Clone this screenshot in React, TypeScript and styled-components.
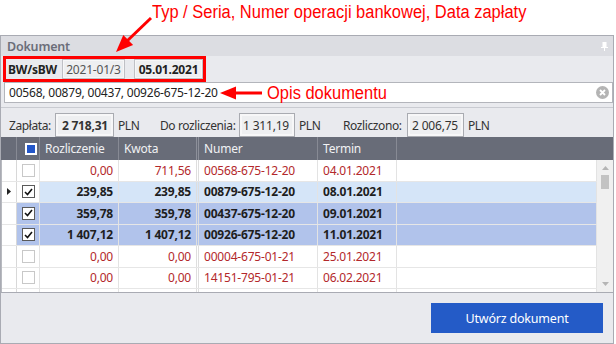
import React from "react";
import styled, { createGlobalStyle, css } from "styled-components";

const Global = createGlobalStyle`
  html, body { margin: 0; padding: 0; background: #ffffff; }
  body { font-family: "Segoe UI", "Noto Sans", "Open Sans", sans-serif; font-size: 12px; color: #222; letter-spacing: -0.2px; }
  * { box-sizing: border-box; }
`;

const UI = `"Segoe UI", "Noto Sans", "Open Sans", sans-serif`;
const ANN = `"Liberation Sans", Arial, sans-serif`;

const Page = styled.div`
  position: relative;
  width: 616px;
  height: 344px;
  overflow: hidden;
`;

const TopNote = styled.div`
  height: 35px;
  padding: 2px 0 0 152px;
`;

const NoteText = styled.span`
  display: inline-block;
  font-family: ${ANN};
  font-size: 18px;
  line-height: 20px;
  letter-spacing: 0;
  color: #ff0000;
  white-space: nowrap;
  transform: scaleX(0.915);
  transform-origin: left center;
`;

const SideNote = styled.div`
  position: absolute;
  left: 267px;
  top: 83px;
`;

const Arrows = styled.svg`
  position: absolute;
  left: 0;
  top: 0;
  pointer-events: none;
`;

const Panel = styled.div`
  width: 614px;
  height: 309px;
  border: 1px solid #a9abb3;
  background: #e9eaee;
  display: flex;
  flex-direction: column;
`;

const PanelHeader = styled.div`
  height: 20px;
  background: #dcdde2;
  display: flex;
  align-items: center;
  justify-content: space-between;
  padding: 0 5px 0 6px;
`;

const Title = styled.span`
  font-family: ${UI};
  font-weight: 600;
  font-size: 12.5px;
  color: #6b6d79;
`;

const DocRow = styled.div`
  display: flex;
  padding-left: 2px;
`;

const RedBox = styled.div`
  width: 203px;
  height: 26px;
  border: 3px solid #ff0000;
  display: flex;
  align-items: stretch;
  padding-left: 2px;
`;

const TypeLabel = styled.span`
  font-weight: 700;
  font-size: 12px;
  color: #222;
  display: flex;
  align-items: center;
  width: 54px;
  white-space: nowrap;
`;

const Field = styled.div<{ $w: number; $bold?: boolean; $ml?: number }>`
  flex: none;
  width: ${(p) => p.$w}px;
  margin-left: ${(p) => p.$ml ?? 0}px;
  border: 1px solid #bfc0c5;
  box-shadow: inset 0 0 0 1px #f7f7f8;
  background: #eeeff1;
  display: flex;
  align-items: center;
  justify-content: center;
  padding: 0 3px;
  font-size: 12px;
  white-space: nowrap;
  ${(p) =>
    p.$bold
      ? css`
          font-weight: 700;
          color: #222;
        `
      : css`
          color: #555;
        `}
`;

const DescInput = styled.div`
  margin-left: 3px;
  width: 609px;
  height: 21px;
  background: #ffffff;
  border: 1px solid #b3b5bb;
  display: flex;
  align-items: center;
  justify-content: space-between;
  padding: 0 3px 0 4px;
  font-size: 12px;
  color: #222;
`;

const Summary = styled.div`
  margin-top: 4px;
  border-top: 1px solid #c9cbd1;
  padding: 5px 0 0 8px;
  height: 30px;
  display: flex;
  align-items: stretch;
  font-size: 12px;
  color: #333;
`;

const SumLabel = styled.span<{ $w: number; $pl?: number }>`
  flex: none;
  display: flex;
  align-items: center;
  width: ${(p) => p.$w}px;
  padding-left: ${(p) => p.$pl ?? 0}px;
  white-space: nowrap;
  letter-spacing: -0.4px;
`;

const SumValue = styled(Field)`
  justify-content: flex-end;
  padding-right: 5px;
  border-color: #a9abb1;
  box-shadow: inset 0 0 0 2px #f7f7f8;
  color: #333;
`;

const Grid = styled.div`
  display: flex;
  flex-direction: column;
  border-bottom: 1px solid #a9abb3;
`;

const HeadRow = styled.div`
  display: grid;
  grid-template-columns: 16px 23px 79px 80px 119px 79px 200px 16px;
  height: 23px;
  background: #686c78;
`;

const HeadCell = styled.div<{ $double?: boolean; $last?: boolean }>`
  border-right: ${(p) => (p.$last ? "none" : p.$double ? "3px double #8d909a" : "1px solid #878a94")};
  color: #f1f2f4;
  font-size: 12px;
  display: flex;
  align-items: center;
  padding-left: 5px;
`;

const HeadCheck = styled.div`
  width: 12px;
  height: 12px;
  background: #2457c9;
  border: 2px solid #ffffff;
  margin-left: 3px;
`;

const BodyWrap = styled.div`
  display: flex;
  height: 132px;
  overflow: hidden;
`;

const Rows = styled.div`
  width: 596px;
  background: #ffffff;
  border-left: 1px solid #b8bac0;
`;

type Kind = "normal" | "focus" | "sel";

const Row = styled.div<{ $kind: Kind }>`
  display: grid;
  grid-template-columns: 15px 23px 79px 80px 119px 79px 200px;
  height: 21.5px;
  border-bottom: 1px solid #e6e6e6;
  ${(p) =>
    p.$kind === "normal"
      ? css`
          color: #b3282b;
        `
      : css`
          color: #1e1e1e;
          font-weight: 700;
        `}
`;

const Cell = styled.div<{ $kind: Kind; $right?: boolean; $double?: boolean; $plain?: boolean }>`
  display: flex;
  align-items: center;
  justify-content: ${(p) => (p.$right ? "flex-end" : "flex-start")};
  padding: ${(p) => (p.$right ? "0 5px 0 0" : "0 0 0 5px")};
  font-size: 12px;
  white-space: nowrap;
  border-right: ${(p) => (p.$double ? "3px double #dedede" : "1px solid #e3e3e3")};
  background: ${(p) =>
    p.$plain ? "#ffffff" : p.$kind === "focus" ? "#d5e5f8" : p.$kind === "sel" ? "#b1c3eb" : "#ffffff"};
`;

const IndCell = styled.div`
  border-right: 1px solid #d8d8d8;
  display: flex;
  align-items: center;
  justify-content: center;
  background: #ffffff;
`;

const Box = styled.div<{ $checked: boolean }>`
  width: 13px;
  height: 13px;
  background: #ffffff;
  border: 1px solid ${(p) => (p.$checked ? "#5a5a5a" : "#c8c8c8")};
  display: flex;
  align-items: center;
  justify-content: center;
`;

const CheckCell = styled(Cell)`
  justify-content: center;
  padding: 0;
`;

const Scroll = styled.div`
  width: 16px;
  background: #f0f0f0;
  display: flex;
  flex-direction: column;
  align-items: center;
  padding: 6px 0;
`;

const Thumb = styled.div`
  width: 8px;
  height: 14px;
  background: #c3c3c3;
  margin-top: 5px;
`;

const Spacer = styled.div`
  flex: 1;
`;

const Footer = styled.div`
  flex: 1;
  display: flex;
  justify-content: flex-end;
  align-items: flex-start;
  padding: 10px 10px 0 0;
`;

const Button = styled.button`
  width: 172px;
  height: 30px;
  border: none;
  background: #245bc7;
  color: #ffffff;
  font-family: ${UI};
  font-size: 12.5px;
  letter-spacing: -0.2px;
  cursor: pointer;
`;

const Tri = ({ down }: { down?: boolean }) => (
  <svg width="7" height="4" viewBox="0 0 7 4">
    <path d={down ? "M0 0H7L3.5 4Z" : "M0 4H7L3.5 0Z"} fill="#b5b5b5" />
  </svg>
);

const Check = () => (
  <svg width="9" height="8" viewBox="0 0 9 8">
    <path d="M1 4 L3.5 6.5 L8 1" fill="none" stroke="#111" strokeWidth="1.6" />
  </svg>
);

type RowData = { kind: Kind; checked: boolean; ind?: boolean; a: string; b: string; num: string; date: string };

const rows: RowData[] = [
  { kind: "normal", checked: false, a: "0,00", b: "711,56", num: "00568-675-12-20", date: "04.01.2021" },
  { kind: "focus", checked: true, ind: true, a: "239,85", b: "239,85", num: "00879-675-12-20", date: "08.01.2021" },
  { kind: "sel", checked: true, a: "359,78", b: "359,78", num: "00437-675-12-20", date: "09.01.2021" },
  { kind: "sel", checked: true, a: "1 407,12", b: "1 407,12", num: "00926-675-12-20", date: "11.01.2021" },
  { kind: "normal", checked: false, a: "0,00", b: "0,00", num: "00004-675-01-21", date: "25.01.2021" },
  { kind: "normal", checked: false, a: "0,00", b: "0,00", num: "14151-795-01-21", date: "06.02.2021" },
];

export default function App() {
  return (
    <Page>
      <Global />
      <TopNote>
        <NoteText>Typ / Seria, Numer operacji bankowej, Data zapłaty</NoteText>
      </TopNote>
      <Panel>
        <PanelHeader>
          <Title>Dokument</Title>
          <svg width="7" height="9" viewBox="0 0 7 9">
            <path d="M1.5 0H5.5V5H7V6H4V9H3V6H0V5H1.5Z" fill="#ffffff" />
          </svg>
        </PanelHeader>
        <DocRow>
          <RedBox>
            <TypeLabel>BW/sBW</TypeLabel>
            <Field $w={63}>2021-01/3</Field>
            <Field $w={69} $ml={9} $bold>
              05.01.2021
            </Field>
          </RedBox>
        </DocRow>
        <DescInput>
          <span>00568, 00879, 00437, 00926-675-12-20</span>
          <svg width="13" height="13" viewBox="0 0 13 13">
            <circle cx="6.5" cy="6.5" r="6.5" fill="#b4b4b4" />
            <path d="M4 4L9 9M9 4L4 9" stroke="#ffffff" strokeWidth="1.8" />
          </svg>
        </DescInput>
        <Summary>
          <SumLabel $w={46}>Zapłata:</SumLabel>
          <SumValue $w={59} $bold>
            2 718,31
          </SumValue>
          <SumLabel $w={46} $pl={4}>
            PLN
          </SumLabel>
          <SumLabel $w={79}>Do rozliczenia:</SumLabel>
          <SumValue $w={56}>1 311,19</SumValue>
          <SumLabel $w={48} $pl={4}>
            PLN
          </SumLabel>
          <SumLabel $w={64}>Rozliczono:</SumLabel>
          <SumValue $w={57}>2 006,75</SumValue>
          <SumLabel $w={40} $pl={4}>
            PLN
          </SumLabel>
        </Summary>
        <Grid>
          <HeadRow>
            <HeadCell />
            <HeadCell>
              <HeadCheck />
            </HeadCell>
            <HeadCell>Rozliczenie</HeadCell>
            <HeadCell $double>Kwota</HeadCell>
            <HeadCell>Numer</HeadCell>
            <HeadCell>Termin</HeadCell>
            <HeadCell $last />
            <HeadCell $last />
          </HeadRow>
          <BodyWrap>
            <Rows>
              {rows.map((r, i) => (
                <Row key={i} $kind={r.kind}>
                  <IndCell>
                    {r.ind && (
                      <svg width="4" height="7" viewBox="0 0 4 7">
                        <path d="M0 0L4 3.5L0 7Z" fill="#222" />
                      </svg>
                    )}
                  </IndCell>
                  <CheckCell $kind={r.kind} $plain={r.kind === "focus"}>
                    <Box $checked={r.checked}>{r.checked && <Check />}</Box>
                  </CheckCell>
                  <Cell $kind={r.kind} $right>
                    {r.a}
                  </Cell>
                  <Cell $kind={r.kind} $right $double>
                    {r.b}
                  </Cell>
                  <Cell $kind={r.kind}>{r.num}</Cell>
                  <Cell $kind={r.kind}>{r.date}</Cell>
                  <Cell $kind={r.kind} />
                </Row>
              ))}
              <Row $kind="normal">
                <IndCell />
                <Cell $kind="normal" />
                <Cell $kind="normal" />
                <Cell $kind="normal" $double />
                <Cell $kind="normal" />
                <Cell $kind="normal" />
                <Cell $kind="normal" />
              </Row>
            </Rows>
            <Scroll>
              <Tri />
              <Thumb />
              <Spacer />
              <Tri down />
            </Scroll>
          </BodyWrap>
        </Grid>
        <Footer>
          <Button>Utwórz dokument</Button>
        </Footer>
      </Panel>
      <SideNote>
        <NoteText>Opis dokumentu</NoteText>
      </SideNote>
      <Arrows width="616" height="344" viewBox="0 0 616 344">
        <line x1="151" y1="18" x2="126" y2="42" stroke="#ff0000" strokeWidth="3" />
        <path d="M116 52 L123.3 35.1 L133.1 45.1 Z" fill="#ff0000" />
        <line x1="262" y1="93" x2="232" y2="93" stroke="#ff0000" strokeWidth="3" />
        <path d="M220 93 L236 86.5 L236 99.5 Z" fill="#ff0000" />
      </Arrows>
    </Page>
  );
}
